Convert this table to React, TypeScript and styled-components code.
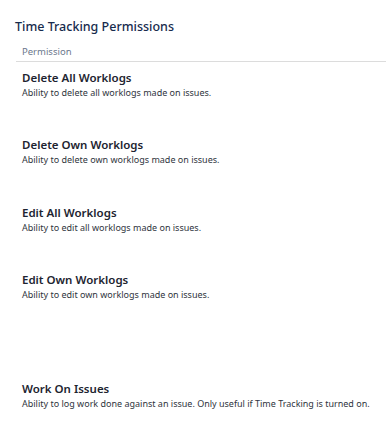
import styled, { createGlobalStyle } from 'styled-components'

const GlobalStyle = createGlobalStyle`
  body {
    margin: 0;
    background: #ffffff;
    font-family: "Noto Sans", "Open Sans", sans-serif;
  }
`

const permissions = [
  { name: 'Delete All Worklogs', description: 'Ability to delete all worklogs made on issues.', height: 67 },
  { name: 'Delete Own Worklogs', description: 'Ability to delete own worklogs made on issues.', height: 68 },
  { name: 'Edit All Worklogs', description: 'Ability to edit all worklogs made on issues.', height: 67 },
  { name: 'Edit Own Worklogs', description: 'Ability to edit own worklogs made on issues.', height: 109 },
  { name: 'Work On Issues', description: 'Ability to log work done against an issue. Only useful if Time Tracking is turned on.', height: 40 },
]

const App = () => {
  return (
    <>
      <GlobalStyle />
      <Page>
        <Title>Time Tracking Permissions</Title>
        <Table>
          <HeaderCell>Permission</HeaderCell>
          {permissions.map((p) => (
            <Row key={p.name} $height={p.height}>
              <Name>{p.name}</Name>
              <Description>{p.description}</Description>
            </Row>
          ))}
        </Table>
      </Page>
    </>
  )
}

const Page = styled.div`
  padding: 18px 0 0 15px;
`

const Title = styled.h2`
  margin: 0;
  font-size: 12.5px;
  font-weight: 500;
  line-height: 18px;
  color: #172b4d;
`

const Table = styled.div`
  margin-top: 9px;
  margin-left: 1px;
`

const HeaderCell = styled.div`
  padding: 0 6px 2px;
  font-size: 9.5px;
  line-height: 14px;
  color: #6b778c;
  border-bottom: 1px solid #dcdcdc;
`

const Row = styled.div<{ $height: number }>`
  height: ${({ $height }) => $height}px;
  padding: 8px 6px 0;
  box-sizing: border-box;
`

const Name = styled.div`
  font-size: 11.5px;
  font-weight: 600;
  line-height: 16px;
  color: #1d2430;
`

const Description = styled.div`
  font-size: 9px;
  line-height: 13px;
  color: #2f3540;
`

export default App
